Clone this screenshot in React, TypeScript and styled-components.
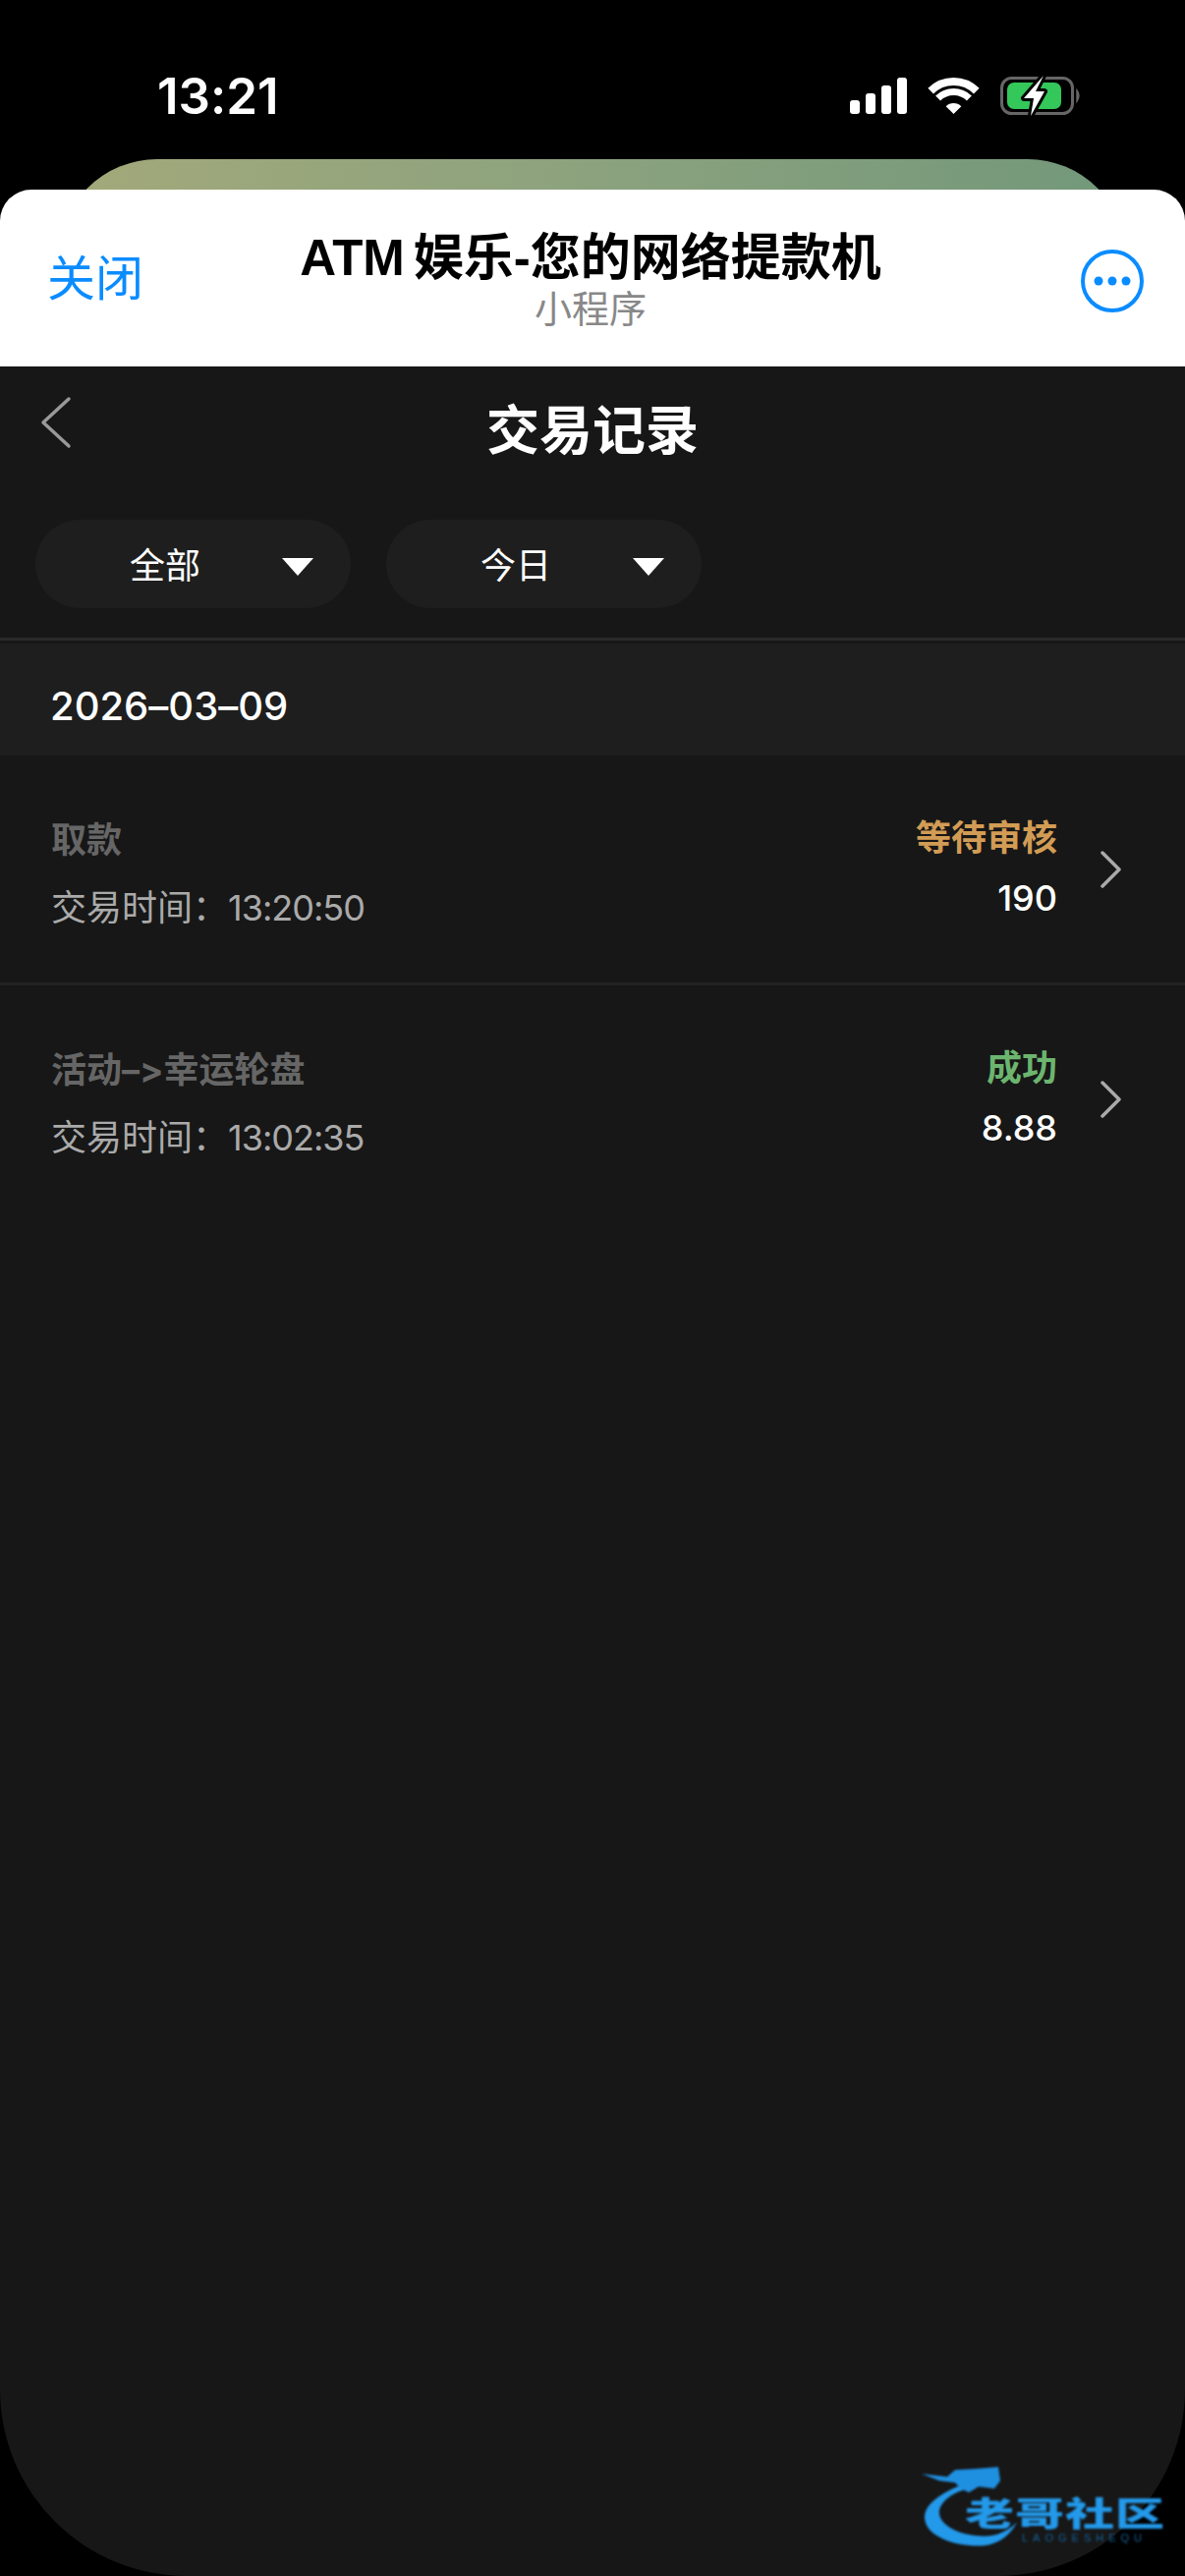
import React from "react";
import styled, { createGlobalStyle } from "styled-components";

const FONT = `Inter, "Liberation Sans", "Noto Sans CJK SC", sans-serif`;
const CJK = `"Noto Sans CJK SC", sans-serif`;

const Global = createGlobalStyle`
  html, body { margin: 0; padding: 0; background: #000; }
  * { box-sizing: border-box; }
`;

const Screen = styled.div`
  width: 1206px;
  height: 2622px;
  background: #000;
  display: flex;
  flex-direction: column;
  overflow: hidden;
  position: relative;
  font-family: ${FONT};
  font-variant-ligatures: none;
  font-feature-settings: "calt" 0;
`;

const StatusBar = styled.div`
  height: 162px;
  flex: none;
  display: flex;
  align-items: flex-start;
  justify-content: space-between;
  padding: 68px 101px 0 160px;
`;

const Clock = styled.div`
  font-size: 51px;
  line-height: 60px;
  font-weight: 600;
  color: #fff;
`;

const StatusIcons = styled.svg`
  display: block;
  margin-top: 8px;
`;

const PeekClip = styled.div`
  height: 31px;
  flex: none;
  overflow: hidden;
  padding: 0 60px;
`;

const PeekCard = styled.div`
  height: 200px;
  border-radius: 100px;
  background: linear-gradient(90deg, #a3a97a 0%, #8ea37e 45%, #72987a 100%);
`;

const MiniHeader = styled.header`
  height: 180px;
  flex: none;
  background: #fff;
  border-radius: 32px 32px 0 0;
  display: grid;
  grid-template-columns: 1fr auto 1fr;
  align-items: start;
  padding: 0 46px 0 42px;
`;

const CloseLink = styled.div`
  font-family: ${CJK};
  font-size: 49px;
  line-height: 60px;
  margin: 57px 0 0 6px;
  color: #0a8cff;
`;

const TitleBlock = styled.div`
  display: flex;
  flex-direction: column;
  align-items: center;
  margin-top: 42px;
`;

const MiniTitle = styled.div`
  font-size: 51px;
  line-height: 56px;
  font-weight: 600;
  color: #000;
  white-space: nowrap;
  font-family: "Liberation Sans", "Noto Sans CJK SC", sans-serif;
`;

const TitleLatin = styled.span`
  margin-right: 9px;
`;

const MiniSub = styled.div`
  font-family: ${CJK};
  font-size: 38px;
  line-height: 42px;
  color: #888;
`;

const MoreIcon = styled.svg`
  justify-self: end;
  margin: 60px -4px 0 0;
  display: block;
`;

const Page = styled.main`
  flex: 1;
  background: #171717;
  border-radius: 0 0 190px 190px;
  display: flex;
  flex-direction: column;
  position: relative;
  overflow: hidden;
`;

const NavBar = styled.div`
  height: 110px;
  flex: none;
  position: relative;
  display: flex;
  align-items: center;
  justify-content: center;
  padding-top: 14px;
`;

const BackIcon = styled.svg`
  position: absolute;
  left: 39px;
  top: 30px;
`;

const NavTitle = styled.h1`
  margin: 0;
  font-family: ${CJK};
  font-size: 54px;
  line-height: 70px;
  font-weight: 700;
  color: #fff;
`;

const Filters = styled.div`
  height: 169px;
  flex: none;
  display: flex;
  gap: 36px;
  padding: 46px 36px 30px;
  border-bottom: 3px solid #2a2a2a;
`;

const Pill = styled.div`
  width: 321px;
  height: 90px;
  border-radius: 45px;
  background: #1e1e1e;
  position: relative;
  display: flex;
  align-items: center;
`;

const PillLabel = styled.span`
  font-family: ${CJK};
  font-size: 36px;
  line-height: 40px;
  color: #fff;
  margin: 0 0 2px 96px;
`;

const Caret = styled.span`
  position: absolute;
  left: 251px;
  top: 39px;
  width: 0;
  height: 0;
  border-left: 16px solid transparent;
  border-right: 16px solid transparent;
  border-top: 18px solid #fff;
`;

const DateBand = styled.div`
  margin-top: 3px;
  height: 114px;
  flex: none;
  background: #1e1e1e;
  display: flex;
  align-items: center;
  padding: 12px 0 0 51px;
  font-size: 40px;
  font-weight: 500;
  color: #fff;
`;

const Row = styled.div`
  height: 234px;
  flex: none;
  border-bottom: 3px solid #222;
  display: flex;
  align-items: flex-start;
  justify-content: space-between;
  padding: 60px 0 0 52px;

  &:last-child {
    border-bottom: none;
  }
`;

const RowLeft = styled.div`
  display: flex;
  flex-direction: column;
  gap: 23px;
  margin-top: 3px;
`;

const RowTitle = styled.div`
  font-size: 36px;
  line-height: 46px;
  font-weight: 700;
  color: #666;
`;

const RowTime = styled.div`
  font-size: 36px;
  line-height: 46px;
  color: #aaa;
`;

const TimeValue = styled.span`
  letter-spacing: -1px;
`;

const RowRight = styled.div`
  display: flex;
  align-items: flex-start;
  gap: 44px;
  padding-right: 64px;
  margin-top: -1px;
`;

const Amounts = styled.div`
  display: flex;
  flex-direction: column;
  align-items: flex-end;
  gap: 13px;
`;

const Status = styled.div<{ $color: string }>`
  font-size: 36px;
  line-height: 50px;
  font-weight: 600;
  color: ${(p) => p.$color};
`;

const Amount = styled.div`
  font-size: 36px;
  line-height: 46px;
  font-weight: 500;
  color: #fff;
`;

const Chevron = styled.svg`
  margin-top: 38px;
  display: block;
`;

const Watermark = styled.div`
  position: absolute;
  left: 936px;
  top: 2505px;
  width: 262px;
  height: 100px;
  filter: blur(0.8px);
`;

const MarkSwirl = styled.svg`
  position: absolute;
  left: 0;
  top: 0;
`;

const MarkText = styled.div`
  position: absolute;
  left: 46px;
  top: 31px;
  font-family: ${CJK};
  font-weight: 900;
  font-size: 50px;
  line-height: 40px;
  letter-spacing: 1px;
  white-space: nowrap;
  color: #2399ea;
  transform: scaleY(0.68);
`;

const MarkSub = styled.div`
  position: absolute;
  left: 104px;
  top: 71px;
  font-family: "Liberation Sans", sans-serif;
  font-size: 11px;
  line-height: 14px;
  letter-spacing: 5px;
  white-space: nowrap;
  color: #14609a;
`;

const rows = [
  { title: "取款", time: "13:20:50", status: "等待审核", color: "#d29c55", amount: "190" },
  { title: "活动–>幸运轮盘", time: "13:02:35", status: "成功", color: "#6cb56f", amount: "8.88" },
];

export default function App() {
  return (
    <Screen>
      <Global />
      <StatusBar>
        <Clock>13:21</Clock>
        <StatusIcons width="240" height="44" viewBox="0 0 240 44">
          <g fill="#fff">
            <rect x="0" y="26" width="10" height="14" rx="3" />
            <rect x="16" y="19" width="10" height="21" rx="3" />
            <rect x="32" y="11" width="10" height="29" rx="3" />
            <rect x="48" y="3" width="10" height="37" rx="3" />
          </g>
          <path d="M82.2 16.7 A33 33 0 0 1 128.8 16.7" fill="none" stroke="#fff" strokeWidth="8" />
          <path d="M89.6 24.1 A22.5 22.5 0 0 1 121.4 24.1" fill="none" stroke="#fff" strokeWidth="7" />
          <path d="M105.5 40 L97.7 32.2 A11 11 0 0 1 113.3 32.2 Z" fill="#fff" />
          <rect x="154.5" y="3.5" width="72" height="36" rx="10" fill="none" stroke="#666" strokeWidth="3" />
          <rect x="160" y="8" width="55" height="27" rx="7" fill="#34c759" />
          <path d="M231 16 Q235 21.5 231 27 Z" fill="#666" stroke="#666" strokeWidth="1.5" />
          <path d="M197 1 L177 24 L187 24 L184 42 L198 17 L189 17 Z" fill="#fff" stroke="#000" strokeWidth="6" paintOrder="stroke" strokeLinejoin="round" />
        </StatusIcons>
      </StatusBar>
      <PeekClip>
        <PeekCard />
      </PeekClip>
      <MiniHeader>
        <CloseLink>关闭</CloseLink>
        <TitleBlock>
          <MiniTitle>
            <TitleLatin>ATM</TitleLatin>娱乐-您的网络提款机
          </MiniTitle>
          <MiniSub>小程序</MiniSub>
        </TitleBlock>
        <MoreIcon width="64" height="66" viewBox="0 0 64 66">
          <circle cx="32" cy="33" r="30" fill="none" stroke="#0a8cff" strokeWidth="4" />
          <circle cx="18" cy="33" r="4.5" fill="#0a8cff" />
          <circle cx="32" cy="33" r="4.5" fill="#0a8cff" />
          <circle cx="46" cy="33" r="4.5" fill="#0a8cff" />
        </MoreIcon>
      </MiniHeader>
      <Page>
        <NavBar>
          <BackIcon width="34" height="54" viewBox="0 0 34 54">
            <path d="M31 3 L5 27 L31 51" fill="none" stroke="#999" strokeWidth="3.5" strokeLinecap="round" strokeLinejoin="round" />
          </BackIcon>
          <NavTitle>交易记录</NavTitle>
        </NavBar>
        <Filters>
          <Pill>
            <PillLabel>全部</PillLabel>
            <Caret />
          </Pill>
          <Pill>
            <PillLabel>今日</PillLabel>
            <Caret />
          </Pill>
        </Filters>
        <DateBand>2026–03–09</DateBand>
        {rows.map((r) => (
          <Row key={r.time}>
            <RowLeft>
              <RowTitle>{r.title}</RowTitle>
              <RowTime>
                交易时间：<TimeValue>{r.time}</TimeValue>
              </RowTime>
            </RowLeft>
            <RowRight>
              <Amounts>
                <Status $color={r.color}>{r.status}</Status>
                <Amount>{r.amount}</Amount>
              </Amounts>
              <Chevron width="22" height="38" viewBox="0 0 22 38">
                <path d="M2 2 L19 19 L2 36" fill="none" stroke="#aaa" strokeWidth="3.5" strokeLinecap="round" strokeLinejoin="round" />
              </Chevron>
            </RowRight>
          </Row>
        ))}
      </Page>
      <Watermark>
        <MarkSwirl width="110" height="92" viewBox="0 0 110 92">
          <path d="M48 22 C22 32 4 44 5 58 C6 78 40 88 66 86 C84 84 94 72 99 62 C88 74 72 78 58 76 C34 74 18 62 20 50 C22 40 36 30 52 28 Z" fill="#2399ea" />
          <path d="M2 13 L28 16 L36 9 L55 8 L80 6 L82 20 L76 28 L60 26 L50 32 L42 28 L36 22 L20 20 Z" fill="#1f8fe0" />
        </MarkSwirl>
        <MarkText>老哥社区</MarkText>
        <MarkSub>LAOGESHEQU</MarkSub>
      </Watermark>
    </Screen>
  );
}
